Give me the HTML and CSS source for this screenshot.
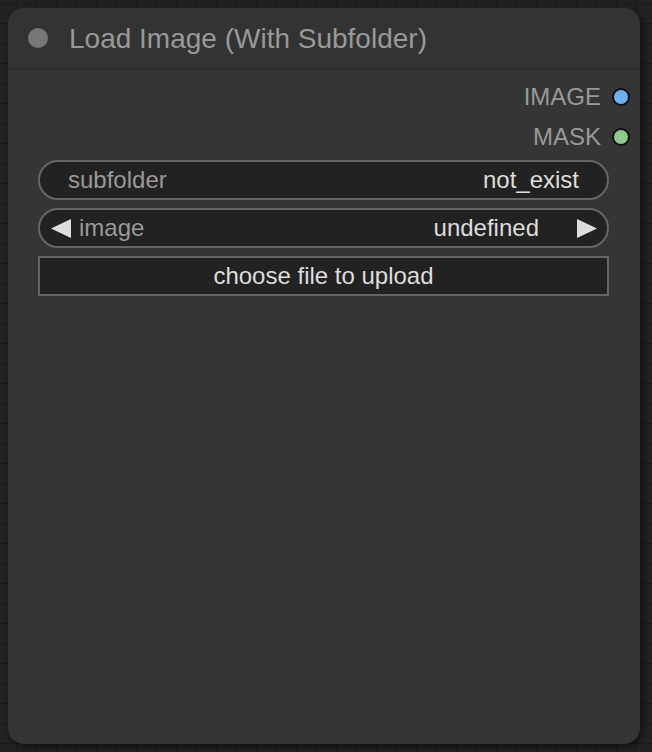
FILE: index.html
```html
<!DOCTYPE html>
<html>
<head>
<meta charset="utf-8">
<link rel="stylesheet" href="styles.css">
</head>
<body>
<div class="node">
  <div class="title">
    <span class="status-dot"></span>
    <span class="title-text">Load Image (With Subfolder)</span>
  </div>
  <div class="body">
    <div class="outputs">
      <div class="output"><span class="out-label">IMAGE</span><span class="slot slot-image"></span></div>
      <div class="output"><span class="out-label">MASK</span><span class="slot slot-mask"></span></div>
    </div>
    <div class="widgets">
      <div class="widget pill">
        <span class="w-label">subfolder</span>
        <span class="w-value">not_exist</span>
      </div>
      <div class="widget pill combo">
        <svg class="arrow" width="20" height="19" viewBox="0 0 20 19"><polygon points="0,9.5 20,0 20,19" fill="#dddddd"/></svg>
        <span class="w-label combo-label">image</span>
        <span class="w-value">undefined</span>
        <svg class="arrow arrow-right" width="20" height="19" viewBox="0 0 20 19"><polygon points="0,0 20,9.5 0,19" fill="#dddddd"/></svg>
      </div>
      <div class="widget button">choose file to upload</div>
    </div>
  </div>
</div>
</body>
</html>
```
FILE: styles.css
```css
html, body {
  margin: 0;
  padding: 0;
}
body {
  width: 652px;
  height: 752px;
  background-color: #222222;
  background-image:
    linear-gradient(to right, #1b1b1b 1px, transparent 1px),
    linear-gradient(to bottom, #1b1b1b 1px, transparent 1px);
  background-size: 20px 20px;
  background-position: 16px 3px;
  font-family: "Liberation Sans", Arial, sans-serif;
  padding: 8px 0 0 8px;
  box-sizing: border-box;
  overflow: hidden;
}
.node {
  width: 632px;
  height: 736px;
  background: #353535;
  border-radius: 16px;
  box-shadow: 3px 3px 6px rgba(0,0,0,0.5);
  overflow: hidden;
  display: flex;
  flex-direction: column;
}
.title {
  height: 60px;
  background: #333333;
  border-bottom: 2px solid #2b2b2b;
  display: flex;
  align-items: center;
  padding-left: 20px;
  box-sizing: content-box;
}
.status-dot {
  width: 20px;
  height: 20px;
  border-radius: 50%;
  background: #777777;
  flex: none;
}
.title-text {
  margin-left: 21px;
  color: #999999;
  font-size: 28px;
  line-height: 1;
  position: relative;
  top: 1px;
}
.body {
  padding: 7px 10px 0 30px;
}
.outputs {
  display: flex;
  flex-direction: column;
  align-items: flex-end;
}
.output {
  height: 40px;
  display: flex;
  align-items: center;
}
.out-label {
  color: #999999;
  font-size: 24px;
}
.slot {
  width: 14px;
  height: 14px;
  border-radius: 50%;
  border: 2px solid #111;
  margin-left: 11px;
  box-sizing: content-box;
}
.slot-image { background: #6eb1f2; }
.slot-mask { background: #8dc98a; }
.widgets {
  margin-top: 3px;
  display: flex;
  flex-direction: column;
  gap: 8px;
  padding-right: 21px;
}
.widget {
  height: 40px;
  box-sizing: border-box;
  background: #222222;
  border: 2px solid #666666;
  display: flex;
  align-items: center;
  font-size: 24px;
  color: #dddddd;
}
.pill {
  border-radius: 20px;
  padding: 0 28px 0 28px;
}
.combo {
  padding: 0 10px 0 11px;
}
.w-label {
  color: #999999;
  flex: 1;
}
.combo-label {
  margin-left: 8px;
}
.w-value {
  color: #dddddd;
}
.arrow {
  flex: none;
  display: block;
}
.combo .w-value {
  margin-right: 38px;
}
.button {
  border-radius: 0;
  justify-content: center;
}
```
